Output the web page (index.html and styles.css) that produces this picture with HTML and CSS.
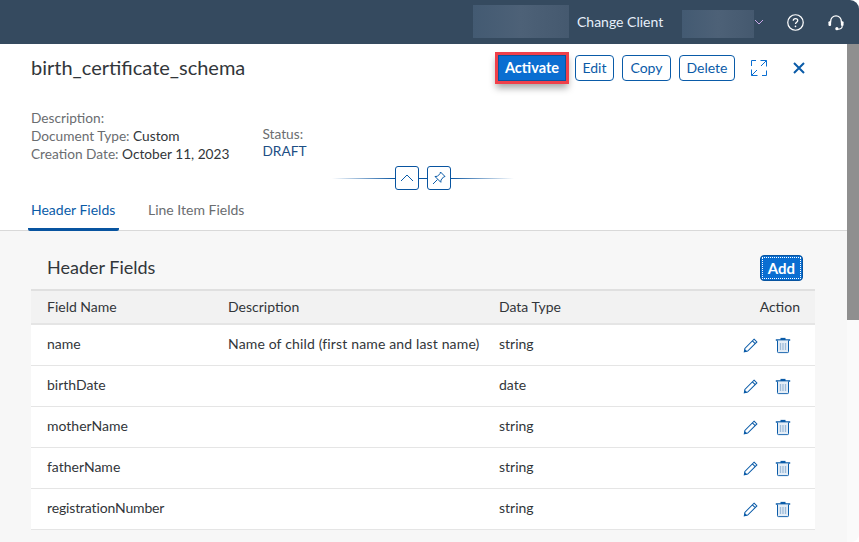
FILE: index.html
```html
<!DOCTYPE html>
<html lang="en">
<head>
  <meta charset="UTF-8">
  <title>birth_certificate_schema</title>
  <link rel="stylesheet" href="styles.css">
</head>
<body>
  <header class="shell">
    <div class="blur blur-wide"></div>
    <span class="client-label">Change Client</span>
    <div class="blur blur-narrow"></div>
    <svg class="chevron" width="10" height="6" viewBox="0 0 10 6"><path d="M1 1l4 4 4-4" fill="none" stroke="#c9a6e8" stroke-width="1"/></svg>
    <svg class="shell-icon help" width="17" height="17" viewBox="0 0 18 18">
      <circle cx="9" cy="9" r="8.200" fill="none" stroke="#fff" stroke-width="1.300"/>
      <path d="M6.600 7.200c0-1.500 1.100-2.300 2.400-2.300s2.400.8 2.400 2.100c0 1.900-2.400 1.800-2.400 3.700" fill="none" stroke="#fff" stroke-width="1.300"/>
      <circle cx="9" cy="13" r="0.900" fill="#fff"/>
    </svg>
    <svg class="shell-icon headset" width="16" height="17" viewBox="0 0 18 18">
      <path d="M3 8.500V7.500a6 6 0 0 1 12 0v1" fill="none" stroke="#fff" stroke-width="1.500"/>
      <rect x="0.500" y="7.500" width="3" height="5.500" rx="1.300" fill="#fff"/>
      <rect x="14.500" y="7.500" width="3" height="5.500" rx="1.300" fill="#fff"/>
      <path d="M16 13c0 2.500-2.500 3.600-5 3.600" fill="none" stroke="#fff" stroke-width="1.300"/>
      <circle cx="10" cy="16" r="1.800" fill="#fff"/>
    </svg>
  </header>

  <div class="dialog">
    <div class="scroll-area">
      <section class="object-head">
        <div class="title-row">
          <h1>birth_certificate_schema</h1>
          <div class="actions">
            <button class="btn btn-primary">Activate</button>
            <button class="btn btn-edit">Edit</button>
            <button class="btn btn-copy">Copy</button>
            <button class="btn btn-delete">Delete</button>
            <svg class="head-icon expand" width="16" height="16" viewBox="0 0 16 16" fill="none" stroke="#0a6ed1" stroke-width="1">
              <path d="M9.500 0.500h6v6M15.500 0.500l-5.500 5.500M0.500 9.500v6h6M0.500 15.500l5.500-5.500M0.500 6V0.500H5M15.500 10.500v5H11"/>
            </svg>
            <svg class="head-icon close" width="12" height="12" viewBox="0 0 12 12" fill="none" stroke="#0a5ba8" stroke-width="2">
              <path d="M1 1l10 10M11 1L1 11"/>
            </svg>
          </div>
        </div>
        <div class="meta">
          <div class="meta-col">
            <div>Description:</div>
            <div>Document Type: <span class="meta-value">Custom</span></div>
            <div>Creation Date: <span class="meta-value">October 11, 2023</span></div>
          </div>
          <div class="meta-col meta-status">
            <div>Status:</div>
            <div class="status">DRAFT</div>
          </div>
        </div>
        <div class="collapse-row">
          <span class="rule rule-left"></span>
          <button class="mini-btn">
            <svg width="14" height="8" viewBox="0 0 14 8"><path d="M1 7l6-6 6 6" fill="none" stroke="#0a5ba8" stroke-width="1"/></svg>
          </button>
          <span class="rule-gap"></span>
          <button class="mini-btn">
            <svg width="14" height="14" viewBox="0 0 14 14" fill="none" stroke="#0a5ba8" stroke-width="1">
              <path d="M8.500 1l4.500 4.500-1.500.5-2.500 3-.2 2.300L3 5.500l2.400-.2 2.600-2.600zM5.500 8.500L1 13"/>
            </svg>
          </button>
          <span class="rule rule-right"></span>
        </div>
      </section>

      <nav class="tabs">
        <a class="tab tab-active">Header Fields</a>
        <a class="tab">Line Item Fields</a>
      </nav>

      <section class="content">
        <div class="table-title">
          <h2>Header Fields</h2>
          <button class="btn-add"><span>Add</span></button>
        </div>
        <div class="table">
          <div class="row row-head">
            <div>Field Name</div><div>Description</div><div>Data Type</div><div class="cell-action cell-action-head">Action</div>
          </div>
          <div class="row">
            <div>name</div><div class="cell-desc">Name of child (first name and last name)</div><div>string</div>
            <div class="cell-action"><svg class="i-edit" width="15" height="15" viewBox="0 0 16 16"><use href="#pencil"/></svg><svg class="i-trash" width="16" height="17" viewBox="0 0 16 16"><use href="#trash"/></svg></div>
          </div>
          <div class="row">
            <div>birthDate</div><div></div><div>date</div>
            <div class="cell-action"><svg class="i-edit" width="15" height="15" viewBox="0 0 16 16"><use href="#pencil"/></svg><svg class="i-trash" width="16" height="17" viewBox="0 0 16 16"><use href="#trash"/></svg></div>
          </div>
          <div class="row">
            <div>motherName</div><div></div><div>string</div>
            <div class="cell-action"><svg class="i-edit" width="15" height="15" viewBox="0 0 16 16"><use href="#pencil"/></svg><svg class="i-trash" width="16" height="17" viewBox="0 0 16 16"><use href="#trash"/></svg></div>
          </div>
          <div class="row">
            <div>fatherName</div><div></div><div>string</div>
            <div class="cell-action"><svg class="i-edit" width="15" height="15" viewBox="0 0 16 16"><use href="#pencil"/></svg><svg class="i-trash" width="16" height="17" viewBox="0 0 16 16"><use href="#trash"/></svg></div>
          </div>
          <div class="row">
            <div class="cell-long">registrationNumber</div><div></div><div>string</div>
            <div class="cell-action"><svg class="i-edit" width="15" height="15" viewBox="0 0 16 16"><use href="#pencil"/></svg><svg class="i-trash" width="16" height="17" viewBox="0 0 16 16"><use href="#trash"/></svg></div>
          </div>
        </div>
      </section>
    </div>
    <div class="scrollbar"><div class="thumb"></div></div>
  </div>

  <svg class="defs" width="0" height="0">
    <symbol id="pencil" viewBox="0 0 16 16">
      <path d="M11.800 1.200l3 3L5 14l-3.600.7.600-3.600zM10 3l3 3" fill="none" stroke="#0a5ba8" stroke-width="1.100"/>
      <path d="M1.400 14.700l.5-3 2.600 2.600z" fill="#0a5ba8"/>
    </symbol>
    <symbol id="trash" viewBox="0 0 16 16">
      <path d="M0.800 2.500h14.400M5.500 1h5" fill="none" stroke="#0a5ba8" stroke-width="1.300"/>
      <path d="M2.500 3v11.200c0 .6.4 1 1 1h9c.6 0 1-.4 1-1V3" fill="#e4edf6" stroke="#0a5ba8" stroke-width="1"/>
      <path d="M5.500 5.500v7M8 5.500v7M10.500 5.500v7" fill="none" stroke="#9dbbd8" stroke-width="1.300"/>
    </symbol>
  </svg>
</body>
</html>
```

FILE: styles.css
```css
* {
  box-sizing: border-box;
}
html, body {
  margin: 0;
  height: 100%;
  overflow: hidden;
}
body {
  font-family: "Lato", "Liberation Sans", sans-serif;
  font-size: 14px;
  color: #32363a;
  background: #fff;
  display: flex;
  flex-direction: column;
}
h1, h2 {
  margin: 0;
  font-weight: 400;
}
button {
  font-family: inherit;
}

.shell {
  flex: none;
  height: 44px;
  background: #354a5f;
  border-top-right-radius: 9px;
  display: flex;
  align-items: center;
  color: #fff;
  padding-left: 473px;
}
.blur {
  background: linear-gradient(to right, #435a72, #4d6177 50%, #45596f);
}
.blur-wide {
  width: 96px;
  height: 33px;
  margin-top: -1px;
}
.blur-narrow {
  width: 72px;
  height: 28px;
  margin-top: 4px;
}
.client-label {
  margin-left: 8px;
  width: 105px;
  padding-bottom: 2px;
  color: #e6effa;
}
.shell-icon {
  margin-left: 23px;
}
.headset {
  margin-left: 24px;
}

.dialog {
  flex: 1;
  min-height: 0;
  display: flex;
}
.scroll-area {
  flex: 1;
  min-width: 0;
  overflow: hidden;
}
.scrollbar {
  flex: none;
  width: 12px;
  background: #fafafa;
  border-bottom-right-radius: 8px;
}
.thumb {
  height: 276px;
  background: #8f8f8f;
}

.object-head {
  height: 143px;
  padding: 11px 42px 0 31px;
}
.title-row {
  display: flex;
  justify-content: space-between;
  align-items: center;
  height: 26px;
}
h1 {
  font-size: 20px;
  margin-top: -2px;
  color: #32363a;
}
.actions {
  display: flex;
  align-items: center;
}
.btn {
  height: 26px;
  padding: 0 0 2px;
  margin-left: 8px;
  font-size: 14px;
  color: #0a5ba8;
  background: #fff;
  border: 1px solid #0a5ba8;
  border-radius: 4px;
}
.btn-edit {
  width: 39px;
}
.btn-copy {
  width: 49px;
}
.btn-delete {
  width: 56px;
}
.btn-primary {
  margin: 0;
  width: 68px;
  color: #fff;
  font-size: 14.500px;
  font-weight: 700;
  background: #0a6ed1;
  border: 1px solid #0854a0;
  box-shadow: 0 0 0 3px #f0404a, 0 5px 7px 2px rgba(0, 0, 0, 0.35);
  border-radius: 0;
  margin-right: 1px;
}
.expand {
  margin-left: 16px;
}
.close {
  margin-left: 26px;
}

.meta {
  display: flex;
  align-items: flex-end;
  margin-top: 28px;
  font-size: 13.700px;
  line-height: 18px;
  color: #6a6d70;
}
.meta-status {
  margin-left: 33px;
  margin-bottom: 4px;
  line-height: 17px;
}
.meta-value {
  color: #32363a;
}
.status {
  color: #1d4f85;
}
.collapse-row {
  display: flex;
  align-items: center;
  margin: 3px 0 0 301px;
}
.rule {
  width: 63px;
  height: 1px;
}
.rule-left {
  background: linear-gradient(to right, rgba(8, 84, 160, 0), #0854a0);
}
.rule-right {
  background: linear-gradient(to left, rgba(8, 84, 160, 0), #0854a0);
}
.rule-gap {
  width: 8px;
  height: 1px;
  background: #0854a0;
}
.mini-btn {
  width: 24px;
  height: 24px;
  padding: 0;
  display: flex;
  align-items: center;
  justify-content: center;
  background: #fff;
  border: 1px solid #0854a0;
  border-radius: 3px;
}

.tabs {
  height: 44px;
  padding-left: 28px;
  display: flex;
  border-bottom: 1px solid #d9d9d9;
}
.tab {
  height: 44px;
  padding: 0 3px;
  margin-right: 26px;
  line-height: 46px;
  color: #6a6d70;
}
.tab-active {
  width: 91px;
  color: #0a5ba8;
  border-bottom: 3px solid #0854a0;
  border-radius: 2px;
}

.content {
  height: 311px;
  background: #f7f7f7;
  padding: 0 32px 0 31px;
}
.table-title {
  height: 58px;
  display: flex;
  justify-content: space-between;
  align-items: center;
  padding: 16px 12px 0 16px;
}
h2 {
  font-size: 18px;
  margin-top: -2px;
  color: #32363a;
}
.btn-add {
  width: 43px;
  height: 26px;
  padding: 1px;
  background: #0a6ed1;
  border: 1px solid #0854a0;
  border-radius: 4px;
  color: #fff;
  font-size: 15px;
  font-weight: 700;
}
.btn-add span {
  display: block;
  height: 22px;
  line-height: 20px;
  border: 1px dotted #fff;
}
.table {
  background: #fff;
  border-top: 2px solid #e0e0e0;
}
.row {
  display: grid;
  grid-template-columns: 181px 271px 1fr 100px;
  align-items: center;
  height: 41px;
  padding: 0 15px 0 16px;
  color: #32363a;
  border-bottom: 1px solid #e5e5e5;
}
.row > div {
  padding-bottom: 4px;
}
.row-head {
  height: 34px;
  background: #f2f2f2;
  border-bottom: 2px solid #e5e5e5;
}
.row-head > div {
  padding-bottom: 2px;
}
.cell-desc {
  letter-spacing: 0.150px;
}
.cell-long {
  letter-spacing: -0.150px;
}
.row > .cell-action {
  display: flex;
  justify-content: flex-end;
  align-items: center;
  padding: 0 9px 0 0;
}
.row > .cell-action-head {
  padding: 0 0 2px;
}
.i-trash {
  margin-left: 17px;
}
.defs {
  position: absolute;
}
```
